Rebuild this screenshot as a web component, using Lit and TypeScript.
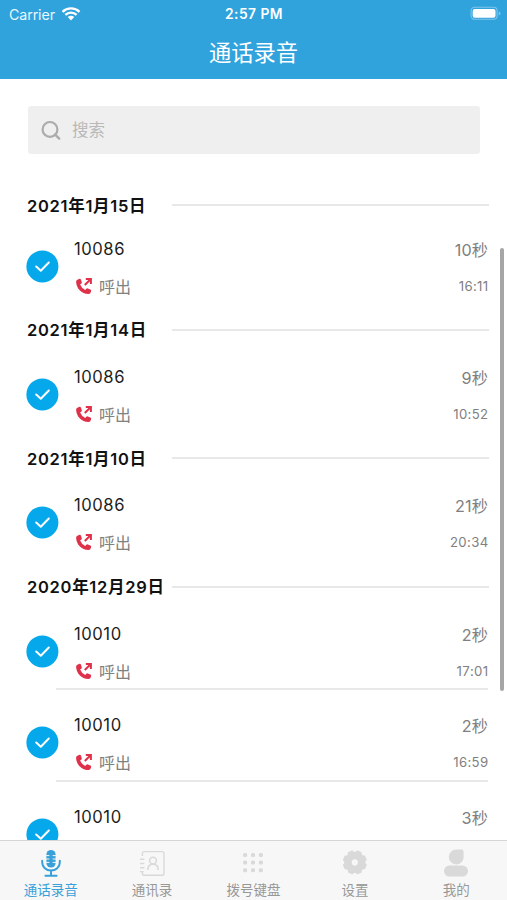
import { LitElement, html, css, svg, nothing } from "lit";
import { customElement, property } from "lit/decorators.js";

interface CallRecord { number: string; length: string; time?: string }
interface DayGroup { date: string; calls: CallRecord[] }

const DAYS: DayGroup[] = [
  { date: "2021年1月15日", calls: [{ number: "10086", length: "10秒", time: "16:11" }] },
  { date: "2021年1月14日", calls: [{ number: "10086", length: "9秒", time: "10:52" }] },
  { date: "2021年1月10日", calls: [{ number: "10086", length: "21秒", time: "20:34" }] },
  {
    date: "2020年12月29日",
    calls: [
      { number: "10010", length: "2秒", time: "17:01" },
      { number: "10010", length: "2秒", time: "16:59" },
      { number: "10010", length: "3秒" },
    ],
  },
];

const GEAR_TEETH = [22, 67, 112, 157, 202, 247, 292, 337];

const TAB_ICONS = {
  mic: svg`
    <rect x="9.4" y="1" width="9.2" height="17.6" rx="4.6" fill="currentColor"/>
    <path d="M9 6.6h3.4M9 10h3.4M9 13.4h3.4M19 6.6h-3.4M19 10h-3.4M19 13.4h-3.4" stroke="#f7f7f7" stroke-width="1"/>
    <path d="M5.2 11.8v1.6a8.8 8.2 0 0 0 17.6 0v-1.6" fill="none" stroke="currentColor" stroke-width="2" stroke-linecap="round"/>
    <path d="M14 21.7v4.8M8.4 26.8h11.2" fill="none" stroke="currentColor" stroke-width="2" stroke-linecap="round"/>`,
  contacts: svg`
    <path d="M4.4 7V4.4Q4.4 2.6 6.2 2.6H24.2Q26 2.6 26 4.4V24.4Q26 26.2 24.2 26.2H6.2Q4.4 26.2 4.4 24.4V22.6M2 10.2h4.4M2 14.5h4.4M2 18.8h4.4M2 22.6h3.6" fill="none" stroke="currentColor" stroke-width="1.4"/>
    <circle cx="15" cy="11.6" r="3.4" fill="none" stroke="currentColor" stroke-width="1.6"/>
    <path d="M9.8 20.9q0-5.6 5.2-5.6t5.2 5.6" fill="none" stroke="currentColor" stroke-width="1.6"/>`,
  keypad: svg`${[5.9, 13.5, 21.3].map((y) =>
    [6.1, 14, 21.9].map((x) => svg`<rect x=${x - 2} y=${y - 2} width="4" height="4" rx="1.5" fill="currentColor"/>`))}`,
  gear: svg`
    ${GEAR_TEETH.map((a) => svg`<rect x="10.9" y="1.4" width="5.8" height="7" rx="1" fill="currentColor" transform=${`rotate(${a} 13.8 13.4)`}/>`)}
    <circle cx="13.8" cy="13.4" r="6.9" fill="none" stroke="currentColor" stroke-width="7.6"/>`,
  person: svg`
    <path d="M14.2 .6H19.4Q21.6 .6 21.6 2.8V7.9A7.4 7.4 0 1 1 14.2 .6Z" fill="currentColor"/>
    <rect x="2" y="16.6" width="24" height="11" rx="5.5" fill="currentColor"/>`,
};

const TABS: { label: string; icon: keyof typeof TAB_ICONS }[] = [
  { label: "通话录音", icon: "mic" },
  { label: "通讯录", icon: "contacts" },
  { label: "拨号键盘", icon: "keypad" },
  { label: "设置", icon: "gear" },
  { label: "我的", icon: "person" },
];

@customElement("call-row")
class CallRow extends LitElement {
  @property({ attribute: false }) call!: CallRecord;
  @property({ type: Boolean }) ruled = false;

  static styles = css`
    :host { display: flex; box-sizing: border-box; height: 91.7px; padding: 0 19px 0 26px; position: relative; }
    :host([ruled])::after { content: ""; position: absolute; left: 56px; right: 19px; bottom: 0; height: 2px; background: #e8e8e8; }
    .check { width: 33px; height: 33px; margin-top: 36px; flex: none; }
    .body { flex: 1; margin-left: 15px; }
    .line { display: flex; align-items: center; justify-content: space-between; }
    .top { height: 24px; margin-top: 23px; }
    .bottom { height: 24px; margin-top: 13.1px; }
    .number { font-size: 16.6px; letter-spacing: 0.55px; color: #1c1c1c; }
    .length { font-size: 16.2px; letter-spacing: 0.1px; color: #808080; }
    .kind { display: flex; align-items: center; gap: 6px; margin-left: 1px; font-size: 16px; color: #808080; }
    .kind svg { width: 18px; height: 18px; }
    .time { font-size: 13.2px; letter-spacing: 0.35px; margin-right: -0.5px; color: #808080; }
  `;

  render() {
    return html`
      <svg class="check" viewBox="0 0 33 33">
        <circle cx="16.4" cy="16.4" r="16" fill="#05a8eb"/>
        <path d="m10.2 16.5 4.6 4.2 8-8.2" fill="none" stroke="#fff" stroke-width="2" stroke-linecap="round" stroke-linejoin="round"/>
      </svg>
      <div class="body">
        <div class="line top">
          <span class="number">${this.call.number}</span><span class="length">${this.call.length}</span>
        </div>
        ${this.call.time ? html`<div class="line bottom">
          <span class="kind">
            <svg viewBox="0 0 18 18">
              <path d="M2.4 2.7 4.5 1.8Q5.6 1.6 6 2.8L6.8 5.2Q7 6.1 6.2 6.7L5.1 7.6Q6.6 11.3 10.2 12.9L11.3 11.8Q11.9 11.1 12.8 11.5L15.4 12.6Q16.5 13.2 16.1 14.2L15.4 16Q14.8 17.1 13.4 17.1C6.4 17 1.2 11.2 1.1 4.8Q1.1 3.4 2.4 2.7Z" fill="#e0314b"/>
              <path d="m9.8 8 5.8-5.8M10.8 2h5.1v5.1" fill="none" stroke="#e0314b" stroke-width="2"/>
            </svg>呼出</span>
          <span class="time">${this.call.time}</span>
        </div>` : nothing}
      </div>`;
  }
}

@customElement("app-root")
class AppRoot extends LitElement {
  static styles = css`
    :host {
      display: flex; flex-direction: column; height: 900px; overflow: hidden; background: #fff;
      font-family: Inter, "Noto Sans CJK SC", sans-serif; font-kerning: none;
    }
    .header { flex: none; height: 79px; background: #30a3dd; color: #fff; box-sizing: border-box; }
    .status { display: grid; grid-template-columns: 1fr auto 1fr; align-items: center; height: 28px; padding: 0 6px 0 9px; font-size: 14.2px; }
    .carrier { display: flex; align-items: center; gap: 6px; color: #e9f7ff; }
    .carrier svg { width: 20px; height: 15px; position: relative; top: -1px; }
    .clock { font-weight: 600; font-size: 13.8px; letter-spacing: 0.45px; margin-right: 2px; }
    .battery { justify-self: end; width: 31px; height: 15px; position: relative; top: -1px; }
    .title { text-align: center; font-size: 22.3px; line-height: 49px; height: 48px; }
    .search {
      flex: none; display: flex; align-items: center; gap: 11px; height: 48px; margin: 27px 27px 0 28px; padding-left: 13px;
      box-sizing: border-box; background: #efefef; border-radius: 3px; color: #b9b9b9; font-size: 16.5px; line-height: 24px;
    }
    .search svg { width: 20px; height: 20px; }
    .list { flex: 1; min-height: 0; overflow: hidden; position: relative; padding-top: 26.2px; }
    .day { display: flex; align-items: center; height: 24px; padding: 12.6px 18px 0 27px; }
    .day:first-child { padding-bottom: 0; margin-bottom: -3px; }
    .date { width: 145px; flex: none; margin-top: -1.6px; font-size: 16.5px; letter-spacing: 0.7px; font-weight: 600; color: #111; white-space: nowrap; }
    .day:first-child .date { margin-top: 0; }
    .rule { flex: 1; height: 2px; background: #e8e8e8; }
    .scrollbar { position: absolute; right: 3px; top: 94px; width: 4px; height: 443px; border-radius: 2px; background: #a6a6a6; }
    .tabs { flex: none; display: grid; grid-template-columns: repeat(5, 1fr); height: 60px; box-sizing: border-box; background: #f7f7f7; border-top: 1px solid #d5d5d5; }
    .tab { display: flex; flex-direction: column; align-items: center; color: #d9d9d9; padding-top: 8px; }
    .tab svg { width: 28px; height: 28px; }
    .tab span { margin-top: 3px; line-height: 20px; font-size: 13.5px; color: #989898; }
    .tab.active, .tab.active span { color: #38a1d9; }
  `;

  render() {
    return html`
      <header class="header">
        <div class="status">
          <span class="carrier">Carrier
            <svg viewBox="0 0 20 15">
              <path d="M1.5 5.8a12.3 12.3 0 0 1 17 0M4.4 8.9a8.1 8.1 0 0 1 11.2 0" fill="none" stroke="#fff" stroke-width="2.4"/>
              <path d="m10 14.4-3.2-3.3a4.6 4.6 0 0 1 6.4 0Z" fill="#fff"/>
            </svg>
          </span>
          <span class="clock">2:57 PM</span>
          <svg class="battery" viewBox="0 0 31 15">
            <rect x="1.1" y="1.3" width="26" height="12" rx="3.5" fill="none" stroke="#7fc5ea" stroke-width="1.1"/>
            <rect x="2.7" y="2.9" width="22.8" height="8.8" rx="2" fill="#fff"/>
            <path d="M28.7 5.2q1.8.8 1.8 2.2t-1.8 2.2Z" fill="#7fc5ea"/>
          </svg>
        </div>
        <div class="title">通话录音</div>
      </header>
      <div class="search">
        <svg viewBox="0 0 20 20"><circle cx="9" cy="9.4" r="7.4" fill="none" stroke="#acacac" stroke-width="2.2"/><path d="m14.2 14.6 4 4" stroke="#acacac" stroke-width="2.4" stroke-linecap="round"/></svg>
        <span>搜索</span>
      </div>
      <main class="list">
        ${DAYS.map((day) => html`
          <div class="day"><span class="date">${day.date}</span><span class="rule"></span></div>
          ${day.calls.map((call) => html`<call-row .call=${call} ?ruled=${day.calls.length > 1}></call-row>`)}
        `)}
        <div class="scrollbar"></div>
      </main>
      <nav class="tabs">
        ${TABS.map((tab, i) => html`
          <div class="tab ${i === 0 ? "active" : ""}">
            <svg viewBox="0 0 28 28">${TAB_ICONS[tab.icon]}</svg><span>${tab.label}</span>
          </div>`)}
      </nav>`;
  }
}
